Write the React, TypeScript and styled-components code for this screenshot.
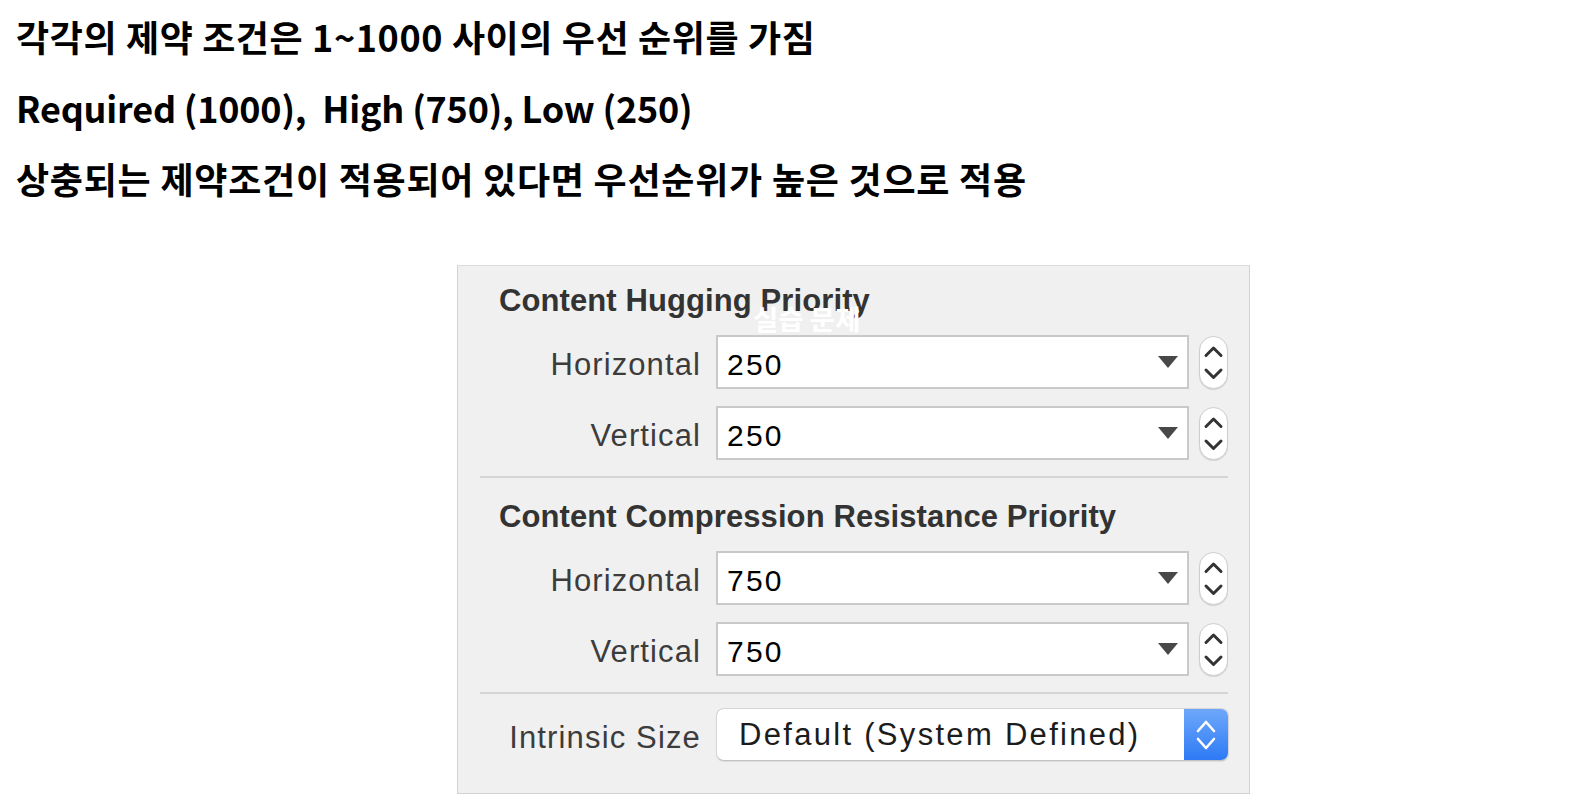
import React from "react";
import styled, { createGlobalStyle } from "styled-components";

const GlobalStyle = createGlobalStyle`
  html, body { margin: 0; padding: 0; background: #ffffff; }
  body { font-family: "Liberation Sans", Arial, sans-serif; }
`;

const Page = styled.div`
  display: flex;
  flex-direction: column;
  padding-top: 1px;
`;

const Notes = styled.div`
  display: flex;
  flex-direction: column;
  padding-left: 16px;
`;

const Note = styled.p<{ $spacing?: number }>`
  margin: 0;
  font-family: "Noto Sans CJK KR", "Noto Sans", sans-serif;
  font-weight: 700;
  font-size: 36px;
  line-height: 71px;
  letter-spacing: ${(p) => p.$spacing ?? 0}px;
  color: #000;
  white-space: pre;
`;

const Panel = styled.section`
  position: relative;
  box-sizing: border-box;
  width: 793px;
  margin: 51px 0 0 457px;
  padding: 17px 21px 32px 22px;
  background: #f0f0f0;
  border: 1px solid #d2d2d2;
  border-top-color: #dcdcdc;
  display: flex;
  flex-direction: column;
`;

const Header = styled.h3`
  margin: 0 0 16px;
  padding-left: 19px;
  font-family: "Liberation Sans", Arial, sans-serif;
  font-weight: 700;
  font-size: 31px;
  line-height: 36px;
  letter-spacing: 0.1px;
  color: #333333;
`;

const Rows = styled.div`
  display: flex;
  flex-direction: column;
  gap: 17px;
`;

const Row = styled.div`
  display: grid;
  grid-template-columns: 218px 473px 29px;
  column-gap: 18px;
  align-items: center;
  & > :nth-child(3) { margin-left: -8px; }
`;

const Label = styled.span<{ $spacing?: number }>`
  text-align: right;
  font-size: 31px;
  line-height: 36px;
  padding-top: 6px;
  letter-spacing: ${(p) => p.$spacing ?? 1.1}px;
  margin-right: -3px;
  color: #3c3c3c;
`;

const Combo = styled.div`
  box-sizing: border-box;
  height: 54px;
  display: flex;
  align-items: center;
  justify-content: space-between;
  padding: 6px 9px 0 9px;
  background: #ffffff;
  border: 2px solid #c9c9c9;
`;

const Value = styled.span`
  font-size: 30px;
  line-height: 36px;
  letter-spacing: 2.2px;
  color: #000;
`;

const Caret = styled.svg`
  width: 20px;
  height: 12px;
  margin-top: -6px;
`;

const Stepper = styled.div`
  box-sizing: border-box;
  width: 29px;
  height: 53px;
  border-radius: 15px;
  background: #ffffff;
  border: 1px solid #cdcdcd;
  box-shadow: 0 1px 1px rgba(0, 0, 0, 0.12);
  display: flex;
`;

const Separator = styled.hr`
  border: 0;
  height: 2px;
  margin: 16px 0 21px;
  background: #d5d5d5;
`;

const LastSeparator = styled(Separator)`
  margin: 16px 0 14px;
`;

const PopupRow = styled.div`
  display: grid;
  grid-template-columns: 218px 513px;
  column-gap: 18px;
  align-items: center;
`;

const Popup = styled.div`
  box-sizing: border-box;
  height: 53px;
  display: flex;
  border-radius: 8px;
  background: #ffffff;
  border: 1px solid #d6d6d6;
  border-bottom-color: #c2c2c2;
  box-shadow: 0 1px 1px rgba(0, 0, 0, 0.08);
  overflow: hidden;
`;

const PopupText = styled.span`
  flex: 1;
  padding-left: 22px;
  align-self: center;
  font-size: 31px;
  line-height: 36px;
  letter-spacing: 2.3px;
  color: #1c1c1c;
`;

const PopupArrows = styled.div`
  width: 44px;
  background: linear-gradient(#6ea8fa, #2e7af5);
  display: flex;
  align-items: center;
  justify-content: center;
`;

const Watermark = styled.span`
  position: absolute;
  left: 295px;
  top: 39px;
  font-family: "Noto Sans CJK KR", "Noto Sans", sans-serif;
  font-weight: 700;
  font-size: 27.5px;
  line-height: 1;
  color: #ffffff;
  white-space: pre;
`;

const DropCaret = () => (
  <Caret viewBox="0 0 20 12">
    <path d="M0 0 H20 L10 12 Z" fill="#484848" />
  </Caret>
);

const StepperIcon = () => (
  <Stepper>
    <svg width="27" height="51" viewBox="0 0 27 51">
      <path d="M6 18.5 L13.5 11 L21 18.5" fill="none" stroke="#333333" strokeWidth="3" strokeLinecap="round" strokeLinejoin="round" />
      <path d="M6 33 L13.5 40.5 L21 33" fill="none" stroke="#333333" strokeWidth="3" strokeLinecap="round" strokeLinejoin="round" />
    </svg>
  </Stepper>
);

type RowData = { label: string; value: string };

const PriorityRow = ({ label, value }: RowData) => (
  <Row>
    <Label>{label}</Label>
    <Combo>
      <Value>{value}</Value>
      <DropCaret />
    </Combo>
    <StepperIcon />
  </Row>
);

const sections: { title: string; rows: RowData[] }[] = [
  {
    title: "Content Hugging Priority",
    rows: [
      { label: "Horizontal", value: "250" },
      { label: "Vertical", value: "250" },
    ],
  },
  {
    title: "Content Compression Resistance Priority",
    rows: [
      { label: "Horizontal", value: "750" },
      { label: "Vertical", value: "750" },
    ],
  },
];

export default function App() {
  return (
    <>
      <GlobalStyle />
      <Page>
        <Notes>
          <Note $spacing={0.6}>각각의 제약 조건은 1~1000 사이의 우선 순위를 가짐</Note>
          <Note $spacing={-0.2}>{"Required (1000),  High (750), Low (250)"}</Note>
          <Note $spacing={0.75}>상충되는 제약조건이 적용되어 있다면 우선순위가 높은 것으로 적용</Note>
        </Notes>
        <Panel>
          {sections.map((s, i) => (
            <React.Fragment key={s.title}>
              {i > 0 && <Separator />}
              <Header>{s.title}</Header>
              <Rows>
                {s.rows.map((r) => (
                  <PriorityRow key={r.label} {...r} />
                ))}
              </Rows>
            </React.Fragment>
          ))}
          <LastSeparator />
          <PopupRow>
            <Label $spacing={1.15}>Intrinsic Size</Label>
            <Popup>
              <PopupText>Default (System Defined)</PopupText>
              <PopupArrows>
                <svg width="22" height="34" viewBox="0 0 22 34">
                  <path d="M3 13 L11 4 L19 13" fill="none" stroke="#ffffff" strokeWidth="2.6" strokeLinecap="round" strokeLinejoin="round" />
                  <path d="M3 21 L11 30 L19 21" fill="none" stroke="#ffffff" strokeWidth="2.6" strokeLinecap="round" strokeLinejoin="round" />
                </svg>
              </PopupArrows>
            </Popup>
          </PopupRow>
          <Watermark>실습 문제</Watermark>
        </Panel>
      </Page>
    </>
  );
}
